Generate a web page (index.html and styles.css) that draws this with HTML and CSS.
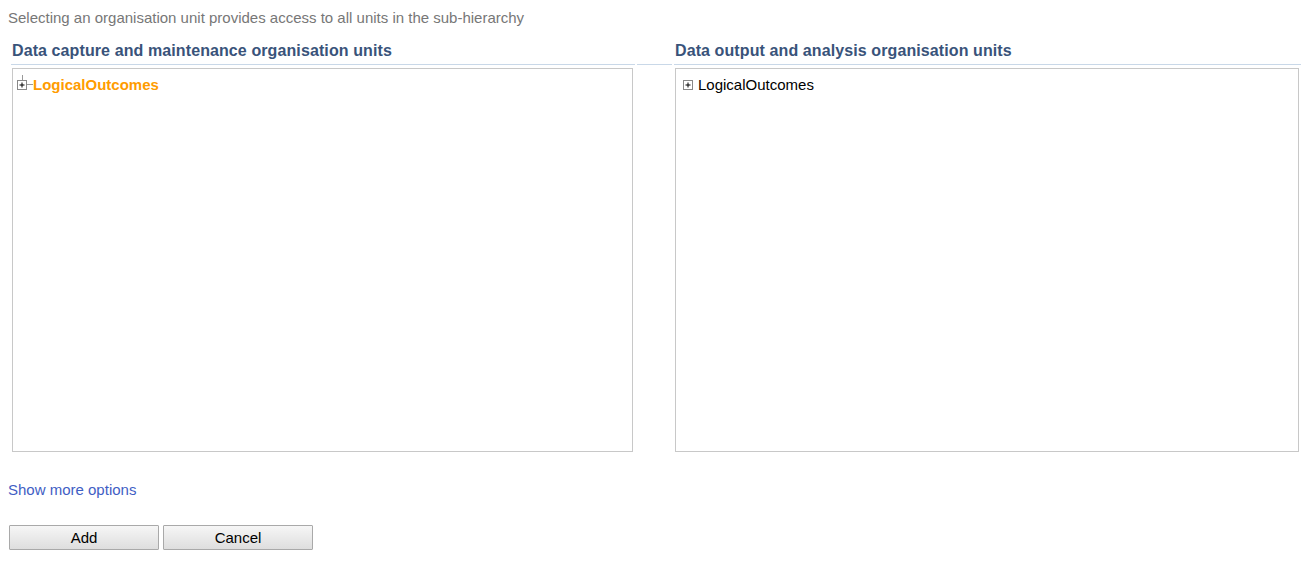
FILE: index.html
```html
<!DOCTYPE html>
<html>
<head>
<meta charset="utf-8">
<link rel="stylesheet" href="styles.css">
</head>
<body>
<div class="intro">Selecting an organisation unit provides access to all units in the sub-hierarchy</div>
<table class="units">
  <tr>
    <th class="col left">Data capture and maintenance organisation units</th>
    <th class="spacer"></th>
    <th class="col right">Data output and analysis organisation units</th>
  </tr>
  <tr>
    <td class="cell">
      <div class="tree">
        <div class="node">
          <span class="toggle"><svg width="11" height="19" viewBox="0 0 11 19"><line x1="5.5" y1="0" x2="5.5" y2="5" stroke="#999"/><line x1="10" y1="9.5" x2="16" y2="9.5" stroke="#999"/><rect x="0.5" y="5.5" width="9" height="9" fill="#fff" stroke="#888"/><line x1="2.5" y1="10" x2="7.5" y2="10" stroke="#000"/><line x1="5" y1="7.5" x2="5" y2="12.5" stroke="#000"/></svg></span><span class="label selected">LogicalOutcomes</span>
        </div>
      </div>
    </td>
    <td></td>
    <td class="cell">
      <div class="tree">
        <div class="node">
          <span class="toggle plain"><svg width="11" height="19" viewBox="0 0 11 19"><rect x="0.5" y="5.5" width="9" height="9" fill="#fff" stroke="#888"/><line x1="2.5" y1="10" x2="7.5" y2="10" stroke="#000"/><line x1="5" y1="7.5" x2="5" y2="12.5" stroke="#000"/></svg></span><span class="label">LogicalOutcomes</span>
        </div>
      </div>
    </td>
  </tr>
</table>
<div class="more"><a href="#" class="more-link">Show more options</a></div>
<div class="actions">
  <button class="btn">Add</button>
  <button class="btn">Cancel</button>
</div>
</body>
</html>
```
FILE: styles.css
```css
body {
  margin: 8px;
  font-family: "Liberation Sans", Arial, sans-serif;
  font-size: 15px;
  color: #000;
  background: #fff;
}
.intro {
  color: #777;
  font-size: 15px;
  line-height: 18px;
  margin-top: 1px;
}
.units {
  border-collapse: separate;
  border-spacing: 2px 0;
  margin-left: 1px;
  margin-top: 14px;
  table-layout: fixed;
}
.units th {
  text-align: left;
  font-size: 16px;
  letter-spacing: 0.1px;
  font-weight: bold;
  color: #39537a;
  border-bottom: 1px solid #c9d8e8;
  padding: 0 0 4px 1px;
  line-height: 19px;
  white-space: nowrap;
}
.units th.left {
  width: 623px;
}
.units th.right {
  width: 626px;
}
.units th.spacer {
  width: 35px;
  padding: 0;
}
.cell {
  padding: 3px 2px 0 1px;
  vertical-align: top;
}
.tree {
  border: 1px solid #c8c8c8;
  height: 368px;
  padding: 6px 4px 8px;
}
.node {
  display: flex;
  align-items: center;
  height: 19px;
}
.toggle {
  display: inline-flex;
  width: 11px;
  height: 19px;
}
.toggle.plain {
  margin-left: 3px;
}
.toggle svg {
  overflow: visible;
}
.label {
  font-size: 15px;
  margin-left: 4px;
  line-height: 19px;
}
.label.selected {
  color: #ff9c00;
  font-weight: bold;
  margin-left: 5px;
}
.more {
  margin-top: 29px;
  line-height: 18px;
}
.more-link {
  color: #3f5ec4;
  text-decoration: none;
}
.actions {
  margin-top: 26px;
  display: flex;
  gap: 4px;
  padding-left: 1px;
}
.btn {
  width: 150px;
  height: 25px;
  margin: 0;
  font-family: "Liberation Sans", Arial, sans-serif;
  font-size: 15px;
  color: #000;
  border: 1px solid #a9a9a9;
  border-radius: 1px;
  background: linear-gradient(#f6f6f6, #dedede);
  padding: 0;
}
```
